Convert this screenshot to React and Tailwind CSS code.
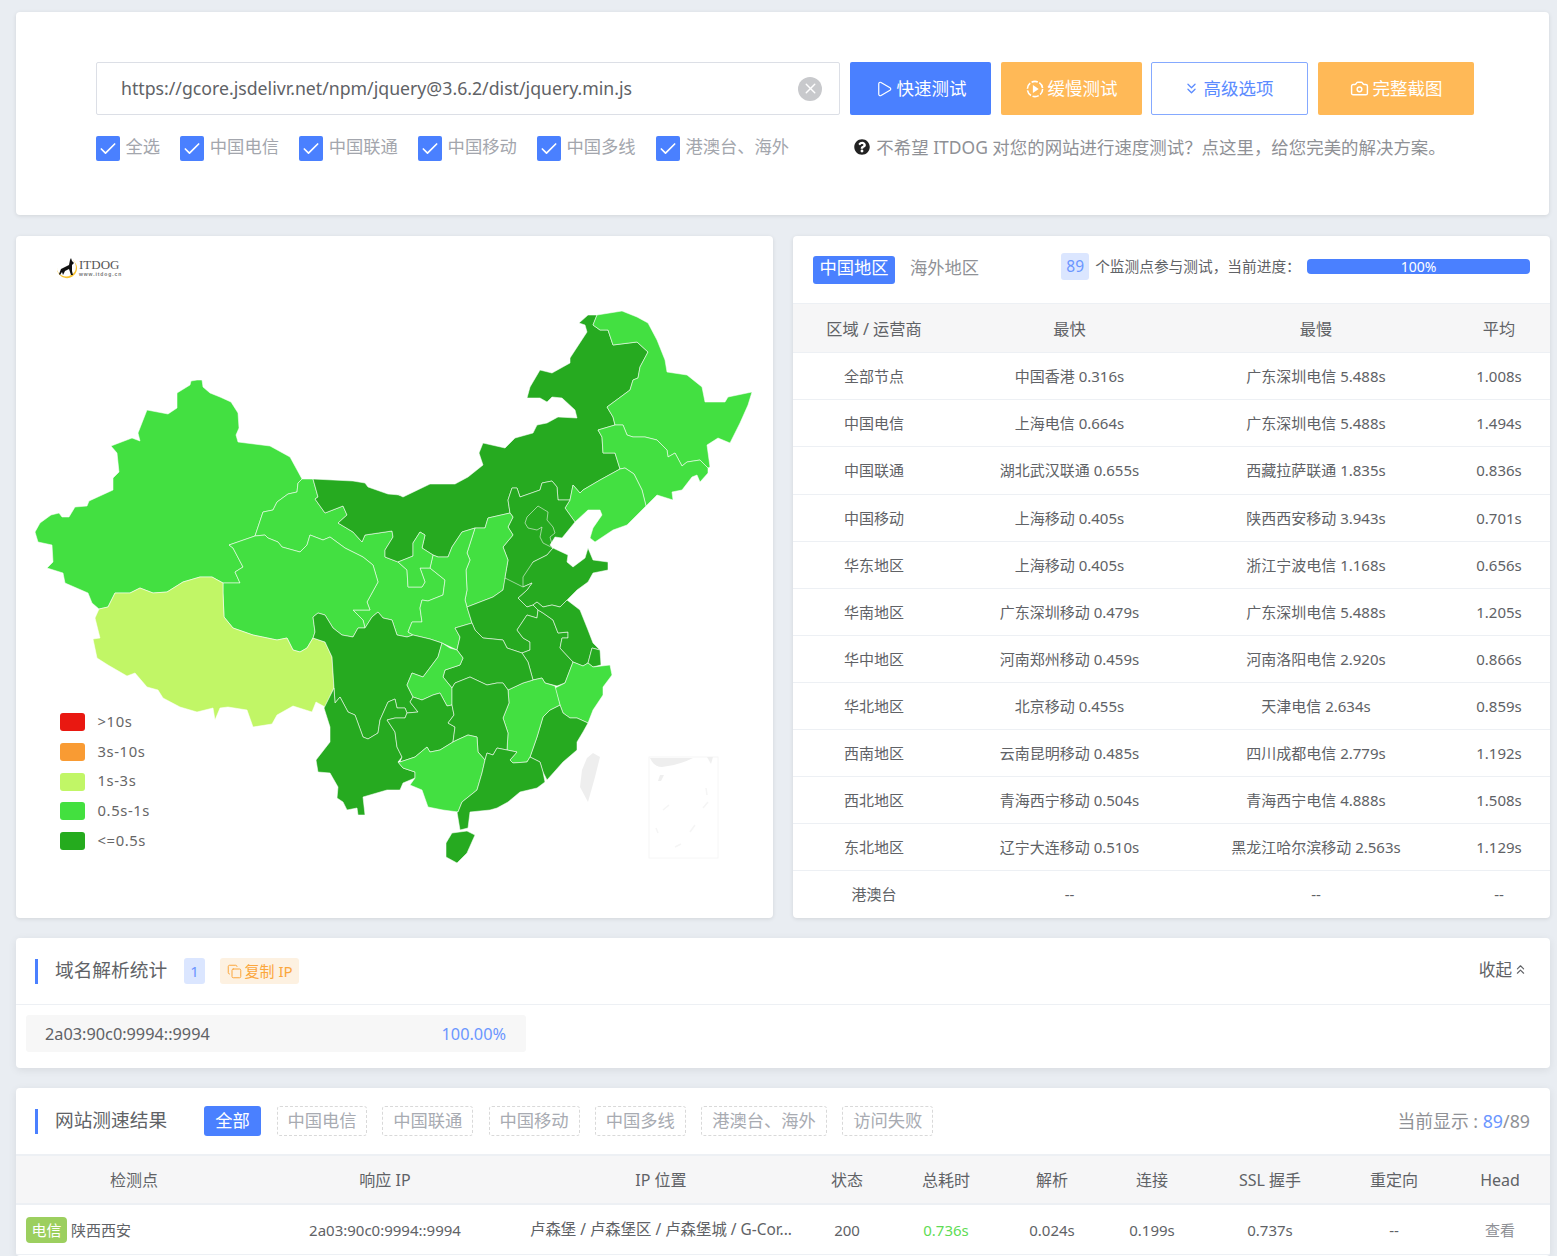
import React from "react";
import { Play, ChevronsDown, ChevronsUp, Camera, Copy, Check, X } from "lucide-react";
import { FaQuestionCircle } from "react-icons/fa";

const D = "#26aa20";
const L = "#43e041";
const Y = "#c1f666";

const regions = [
  [L, "197,380 191,381 190,385 177,393 177,408 168,414 147,410 138,433 140,441 132,438 111,446 117,453 119,472 113,478 113,490 89,501 87,506 75,507 69,517 62,517 59,513 51,515 40,523 35,532 38,542 52,545 53,562 47,568 63,573 65,583 88,593 92,603 99,609 108,607 115,593 130,593 140,588 153,593 167,592 183,582 200,577 212,577 223,583 240,583 235,572 243,567 233,548 229,545 255,536 263,512 273,510 277,502 288,494 297,492 298,483 302,479 290,457 270,446 238,442 236,435 239,428 238,413 231,402 220,397 210,393 203,387 202,380"],
  [L, "302,479 313,479 318,497 315,499 325,513 343,506 347,515 338,523 353,532 362,542 365,535 392,531 393,537 385,550 385,557 398,562 407,570 408,587 422,587 425,582 420,568 430,568 445,580 443,595 428,601 422,600 420,608 422,622 412,622 408,632 413,635 407,637 397,635 392,620 383,618 378,612 372,617 365,628 363,620 353,610 370,610 367,602 378,582 373,565 363,557 345,548 330,537 323,540 310,535 307,545 300,552 282,547 278,542 268,538 265,535 255,536 263,512 273,510 277,502 288,494 297,492 298,483"],
  [L, "229,545 255,536 265,535 268,538 278,542 282,547 300,552 307,545 310,535 323,540 330,537 345,548 363,557 373,565 378,582 367,602 370,610 353,610 363,620 365,628 358,628 353,637 342,635 333,628 325,615 318,613 313,617 315,632 313,638 307,648 300,652 293,650 287,638 277,640 253,635 233,628 224,617 223,593 223,583 240,583 235,572 243,567 233,548"],
  [Y, "99,609 108,607 115,593 130,593 140,588 153,593 167,592 183,582 200,577 212,577 223,583 223,593 224,617 233,628 253,635 277,640 287,638 293,650 300,652 307,648 313,638 325,642 332,657 334,688 332,692 325,707 316,702 312,712 293,706 277,715 272,724 253,727 247,710 228,707 220,708 215,720 213,708 197,712 180,707 163,698 158,690 147,687 135,673 127,676 108,665 97,658 93,639 100,638 95,618"],
  [D, "313,479 353,481 365,483 368,487 388,494 400,495 397,494 403,497 430,484 455,484 468,477 483,465 479,453 483,443 505,448 515,438 533,433 537,425 547,423 558,417 577,418 575,410 562,398 552,397 547,402 540,398 527,398 530,387 540,370 552,373 570,363 570,358 587,332 585,325 579,323 588,315 597,315 593,325 600,330 608,330 613,345 637,342 648,352 640,367 638,378 633,380 630,390 607,407 613,417 615,425 598,430 602,437 603,453 615,453 620,469 600,480 583,490 580,493 573,485 570,500 558,500 557,487 552,481 542,483 540,490 520,497 517,488 512,488 508,500 510,513 488,518 485,528 475,528 462,532 452,547 448,557 438,557 433,555 422,548 425,535 420,532 413,543 413,556 398,562 385,557 385,550 393,537 392,531 365,535 362,542 353,532 338,523 347,515 343,506 325,513 315,499 318,497"],
  [L, "597,315 622,311 637,317 648,323 657,340 665,360 667,372 687,375 702,387 705,402 725,402 728,397 752,392 748,405 740,423 730,443 718,438 707,445 710,467 708,468 700,460 687,462 682,466 675,453 668,457 667,450 657,440 645,437 633,437 627,435 623,425 615,425 613,417 607,407 630,390 633,380 638,378 640,367 648,352 637,342 613,345 608,330 600,330 593,325"],
  [L, "615,425 623,425 627,435 633,437 645,437 657,440 667,450 668,457 675,453 682,466 687,462 700,460 708,468 708,473 700,482 697,475 692,477 682,490 672,492 673,500 657,495 646,506 642,490 634,474 625,468 620,469 615,453 603,453 602,437 598,430"],
  [L, "620,469 625,468 634,474 642,490 646,506 627,525 613,530 595,542 590,538 593,528 602,515 600,510 588,510 575,522 565,508 570,500 573,485 580,493 583,490 600,480"],
  [D, "570,500 558,500 557,487 552,481 542,483 540,490 520,497 517,488 512,488 508,500 510,513 513,517 508,527 513,535 503,547 508,560 505,577 505,582 523,589 525,580 533,562 547,555 553,548 550,545 555,537 562,538 575,522 565,508"],
  [L, "475,528 485,528 488,518 510,513 513,517 508,527 513,535 503,547 508,560 505,577 505,580 503,590 493,597 480,602 467,607 465,600 467,590 466,570 470,560 467,553"],
  [L, "462,532 475,528 467,553 470,560 466,570 467,590 465,600 467,607 472,623 455,628 460,637 457,650 442,643 430,639 413,635 408,632 412,622 422,622 420,608 422,600 428,601 443,595 445,580 430,568 433,555 438,557 448,557 452,547"],
  [L, "413,556 413,543 420,532 425,535 422,548 433,555 430,568 420,568 425,582 422,587 408,587 407,570 398,562"],
  [D, "553,548 568,555 567,562 573,567 585,558 588,548 593,560 608,562 608,570 593,573 588,582 577,590 567,600 560,607 552,605 543,607 537,602 533,605 527,607 518,598 527,590 532,583 523,587 523,577 533,562 547,555"],
  [D, "505,578 523,587 532,583 527,590 518,598 527,607 533,605 538,610 537,618 527,615 517,630 523,638 530,642 530,650 522,653 507,648 503,640 483,638 475,630 472,623 467,607 480,602 493,597 503,590"],
  [D, "527,615 537,618 538,610 543,613 553,620 558,633 568,632 568,638 562,638 560,648 573,662 565,683 557,686 545,683 542,678 533,680 528,662 522,653 530,650 530,642 523,638 517,630"],
  [D, "537,602 543,607 552,605 560,607 567,600 580,610 588,630 593,643 600,650 592,648 588,663 583,666 573,662 560,648 562,638 568,638 568,632 558,633 553,620 543,613 538,610 533,605"],
  [D, "592,648 600,650 601,665 593,667 588,663"],
  [L, "573,662 583,666 588,663 593,667 610,665 612,675 603,687 603,695 593,710 588,723 577,718 570,718 563,713 560,705 555,688 565,683"],
  [D, "560,705 563,713 570,718 577,718 588,723 583,732 577,742 577,750 563,762 547,780 543,772 540,762 530,757 537,737 543,717 550,710"],
  [L, "508,690 523,683 533,680 542,678 545,683 555,686 560,705 550,710 543,717 537,737 530,757 527,762 513,763 510,760 517,752 507,750 508,733 503,718 509,703"],
  [D, "457,650 460,637 455,628 472,623 475,630 483,638 503,640 507,648 522,653 528,662 533,680 523,683 508,690 503,683 497,683 487,685 470,677 455,683 452,688 443,677 445,670 460,665 463,658"],
  [D, "313,617 318,613 325,615 333,628 342,635 353,637 358,628 365,628 372,617 378,612 383,618 392,620 397,635 407,637 413,635 430,639 442,643 438,657 432,665 423,677 412,673 407,685 413,697 410,702 418,712 407,713 405,708 397,708 395,699 388,702 380,720 378,733 368,739 363,737 355,715 348,712 340,697 335,703 334,688 332,657 325,642 313,638 315,632"],
  [L, "442,643 450,648 457,650 463,658 460,665 445,670 443,677 452,688 452,705 447,706 440,693 433,695 422,700 413,697 407,685 412,673 423,677 432,665 438,657"],
  [D, "380,720 388,702 395,699 397,708 405,708 407,713 405,718 395,718 387,720 395,732 397,747 402,757 398,762 403,768 415,772 415,778 403,783 400,790 387,790 363,797 365,815 358,815 357,808 347,810 343,802 337,798 338,787 330,773 318,772 316,760 330,742 330,727 324,708 332,692 334,688 335,703 340,697 348,712 355,715 363,737 368,739 378,733"],
  [D, "387,720 395,718 405,718 407,713 418,712 410,702 413,697 422,700 433,695 440,693 447,706 452,705 454,715 448,723 455,727 453,742 440,750 430,752 427,747 415,757 400,762 402,757 397,747 395,732"],
  [D, "452,688 455,683 470,677 487,685 497,683 503,683 508,690 509,703 503,718 508,733 507,750 497,748 493,755 487,753 485,760 478,752 477,737 468,735 457,740 453,742 455,727 448,723 454,715 452,705"],
  [L, "415,757 427,747 430,752 440,750 453,742 457,740 468,735 477,737 478,752 485,760 482,773 477,790 462,802 458,812 443,810 428,807 422,790 410,785 415,778 415,772 403,768 398,762 400,762"],
  [D, "485,760 487,753 493,755 497,748 507,750 517,752 510,760 513,763 527,762 530,757 540,762 543,772 545,782 537,788 520,792 508,802 497,808 490,810 470,812 468,828 460,830 457,812 458,812 462,802 477,790 482,773"],
  [D, "475,835 467,853 457,863 446,857 446,843 452,833 467,831"],
];

const islands = "593,753 600,757 595,777 588,802 580,787 582,770 587,758";

const bjtj = "525,523 527,517 538,506 548,512 547,520 553,527 555,533 550,537 553,548 543,543 540,537 542,527 537,530 528,528 525,523";

const ChinaMap = () => (
  <svg className="absolute left-0 top-0" width="757" height="682" viewBox="16 236 757 682">
    {regions.map(([fill, points], i) => (
      <polygon key={i} points={points} fill={fill} stroke="#ffffff" strokeOpacity="0.6" strokeWidth="0.9" strokeLinejoin="round" />
    ))}
    <polyline points={bjtj} fill="none" stroke="#ffffff" strokeOpacity="0.6" strokeWidth="0.9" />
    <polygon points={islands} fill="#eeeeee" />
    <rect x="649" y="757" width="69" height="101" fill="none" stroke="#f6f6f6" strokeWidth="1" />
    <path d="M650 758 L693 758 Q680 765 662 767 Q654 767 650 758 Z" fill="#eeeeee" />
    <path d="M707 757 L713 757 L711 764 Z M664 775 L661 781 L658 781 L660 775 Z" fill="#efefef" />
    <path d="M706 788 L707 795 M663 810 L669 805 M703 808 L708 802 M690 832 L695 825 M675 847 L681 844 M656 828 L658 833" stroke="#f5f5f5" strokeWidth="1.5" fill="none" />
  </svg>
);

const Logo = () => (
  <div className="absolute left-[40px] top-[21px] flex items-center gap-[2px]">
    <svg width="21" height="22" viewBox="0 0 21 22">
      <path d="M15 2 A10 10 0 1 1 1 11 A9 9 0 0 0 15 18 A9 9 0 0 0 15 2 Z" fill="#f8c22e" />
      <path d="M3 17 L5 12 L9 10 L13 8 L14 3 L15 1 L16 4 L18 6 L16 8 L16 14 L17 18 L15 18 L13 12 L9 14 L7 18 L6 15 L4 18 Z" fill="#111111" />
    </svg>
    <div className="flex flex-col leading-none">
      <span className="text-[13px] leading-[12px] text-[#555555] [font-family:'Liberation_Serif',serif]">ITDOG</span>
      <span className="text-[5px] leading-[7px] font-bold tracking-[0.9px] text-[#777777] [font-family:'Liberation_Sans',sans-serif]">www.itdog.cn</span>
    </div>
  </div>
);

const legend = [
  ["bg-[#e91811]", ">10s"],
  ["bg-[#f99b33]", "3s-10s"],
  ["bg-[#c1f666]", "1s-3s"],
  ["bg-[#43e03f]", "0.5s-1s"],
  ["bg-[#25ab1e]", "<=0.5s"],
];

const Legend = () => (
  <div className="absolute left-[44px] top-[477px] flex flex-col gap-[11.75px]">
    {legend.map(([c, t]) => (
      <div key={t} className="flex h-[18px] items-center gap-[12.5px]">
        <span className={`h-[18px] w-[25px] rounded-[3px] ${c}`} />
        <span className="pb-[2px] text-[14.8px] tracking-[0.6px] text-[#666666]">{t}</span>
      </div>
    ))}
  </div>
);

const Box = ({ label }) => (
  <label className="flex h-[25px] items-center gap-[5.5px]">
    <span className="flex h-[25px] w-[24px] items-center justify-center rounded-[2px] bg-[#4a80ff] text-white">
      <Check size={20} strokeWidth={2} />
    </span>
    <span className="pb-[3px] text-[17.3px] text-[#a3a6ad]">{label}</span>
  </label>
);

const Btn = ({ w, cls, children }) => (
  <button className={`flex h-[53px] items-center justify-center gap-[4px] rounded-[2px] text-[17.5px] ${w} ${cls}`}>
    {children}
  </button>
);

const SlowIcon = () => (
  <svg width="18" height="18" viewBox="0 0 17 17">
    <circle cx="8.5" cy="8.5" r="7.2" fill="none" stroke="#ffffff" strokeWidth="1.5" strokeDasharray="6 1.6" />
    <path d="M6.5 4.8 L12 8.5 L6.5 12.2 Z" fill="#ffffff" />
  </svg>
);

const summary = [
  ["全部节点", "中国香港 0.316s", "广东深圳电信 5.488s", "1.008s"],
  ["中国电信", "上海电信 0.664s", "广东深圳电信 5.488s", "1.494s"],
  ["中国联通", "湖北武汉联通 0.655s", "西藏拉萨联通 1.835s", "0.836s"],
  ["中国移动", "上海移动 0.405s", "陕西西安移动 3.943s", "0.701s"],
  ["华东地区", "上海移动 0.405s", "浙江宁波电信 1.168s", "0.656s"],
  ["华南地区", "广东深圳移动 0.479s", "广东深圳电信 5.488s", "1.205s"],
  ["华中地区", "河南郑州移动 0.459s", "河南洛阳电信 2.920s", "0.866s"],
  ["华北地区", "北京移动 0.455s", "天津电信 2.634s", "0.859s"],
  ["西南地区", "云南昆明移动 0.485s", "四川成都电信 2.779s", "1.192s"],
  ["西北地区", "青海西宁移动 0.504s", "青海西宁电信 4.888s", "1.508s"],
  ["东北地区", "辽宁大连移动 0.510s", "黑龙江哈尔滨移动 2.563s", "1.129s"],
  ["港澳台", "--", "--", "--"],
];

const filters = [
  ["中国电信", "w-[90px]"],
  ["中国联通", "w-[91px]"],
  ["中国移动", "w-[91px]"],
  ["中国多线", "w-[91px]"],
  ["港澳台、海外", "w-[126px]"],
  ["访问失败", "w-[91px]"],
];

const heads = ["检测点", "响应 IP", "IP 位置", "状态", "总耗时", "解析", "连接", "SSL 握手", "重定向", "Head"];

const Bar = () => <span className="h-[25px] w-[3px] bg-[#4a80ff]" />;

export default function App() {
  return (
    <div className="flex h-[1256px] flex-col overflow-hidden bg-[#e9edf2] pl-[16px] pr-[7px] pt-[12px] text-[#606266] [font-family:'Noto_Sans','Noto_Sans_CJK_SC',sans-serif]">
      {/* Search */}
      <section className="mr-px h-[203px] shrink-0 rounded-[4px] bg-white pl-[80px] pt-[50px] shadow-[0_1px_4px_rgba(0,0,0,0.1)]">
        <div className="flex items-center">
          <div className="flex h-[53px] w-[744px] items-center justify-between rounded-[2px] border border-[#dcdfe6] pl-[24px] pr-[17px]">
            <span className="text-[17.7px] text-[#606266]">https://gcore.jsdelivr.net/npm/jquery@3.6.2/dist/jquery.min.js</span>
            <span className="flex h-[24px] w-[24px] items-center justify-center rounded-full bg-[#c8c9cc] text-white">
              <X size={17} strokeWidth={2} />
            </span>
          </div>
          <Btn w="ml-[10px] w-[141px]" cls="bg-[#4a80ff] text-white">
            <Play size={18} strokeWidth={1.6} />快速测试
          </Btn>
          <Btn w="ml-[10px] w-[141px]" cls="bg-[#ffb957] text-white">
            <SlowIcon />缓慢测试
          </Btn>
          <Btn w="ml-[9px] w-[157px]" cls="border border-[#85a9ff] bg-white pr-[3px] text-[#5b8bff]">
            <ChevronsDown size={17} strokeWidth={1.8} />高级选项
          </Btn>
          <Btn w="ml-[10px] w-[156px]" cls="bg-[#ffb957] text-white">
            <Camera size={19} strokeWidth={1.8} />完整截图
          </Btn>
        </div>
        <div className="mt-[21px] flex h-[25px] items-center gap-[20.25px]">
          {["全选", "中国电信", "中国联通", "中国移动", "中国多线", "港澳台、海外"].map((l) => (
            <Box key={l} label={l} />
          ))}
          <div className="ml-[45px] flex items-center gap-[6px] pb-[3px] text-[17.45px] text-[#8f9196]">
            <FaQuestionCircle className="text-[#222222]" size={16} />
            <span>不希望 ITDOG 对您的网站进行速度测试？点这里，给您完美的解决方案。</span>
          </div>
        </div>
      </section>

      {/* Map + summary */}
      <div className="mt-[21px] flex h-[682px] shrink-0 gap-[20px]">
        <section className="relative h-full w-[757px] rounded-[4px] bg-white shadow-[0_1px_4px_rgba(0,0,0,0.1)]">
          <ChinaMap />
          <Logo />
          <Legend />
        </section>
        <section className="h-full w-[757px] overflow-hidden rounded-[4px] bg-white shadow-[0_1px_4px_rgba(0,0,0,0.1)]">
          <div className="flex h-[67px] items-center pl-[20px]">
            <span className="flex h-[28px] w-[82px] items-center justify-center rounded-[3px] bg-[#4a80ff] pb-[3px] text-[17.3px] text-white">中国地区</span>
            <span className="ml-[15px] pb-[3px] text-[17.3px] text-[#8f9196]">海外地区</span>
            <div className="ml-[82px] mb-[6px] flex items-center">
              <span className="flex h-[27px] w-[28px] items-center justify-center rounded-[3px] bg-[#dbe6ff] text-[15.5px] text-[#6b96ff]">89</span>
              <span className="ml-[6px] w-[206px] shrink-0 text-[14.7px] text-[#606266]">个监测点参与测试，当前进度：</span>
              <div className="ml-[6px] flex h-[15px] w-[223px] items-center justify-center rounded-[4px] bg-[#4a80ff] text-[14px] text-white">100%</div>
            </div>
          </div>
          <div className="grid h-[50px] grid-cols-[162px_229px_264px_102px] items-center border-y border-[#edf0f4] bg-[#f6f6f7] pt-[3px] text-center text-[16.2px]">
            <span>区域 / 运营商</span><span>最快</span><span>最慢</span><span>平均</span>
          </div>
          {summary.map((r, idx) => (
            <div key={r[0]} className={`grid grid-cols-[162px_229px_264px_102px] items-center border-b border-[#edf0f4] text-center text-[15px] last:border-b-0 ${idx === 2 ? "h-[48px]" : "h-[47px]"}`}>
              {r.map((c, i) => (
                <span key={i}>{c}</span>
              ))}
            </div>
          ))}
        </section>
      </div>

      {/* DNS */}
      <section className="mt-[20px] h-[130px] shrink-0 rounded-[4px] bg-white shadow-[0_2px_8px_rgba(0,0,0,0.08)]">
        <div className="flex h-[67px] items-center border-b border-[#edf0f4] pl-[19px] pr-[22px]">
          <Bar />
          <span className="ml-[17px] pb-[2px] text-[18.7px] text-[#606266]">域名解析统计</span>
          <span className="ml-[17px] flex h-[26px] w-[21px] items-center justify-center rounded-[3px] bg-[#dbe6ff] text-[15px] text-[#6b96ff]">1</span>
          <span className="ml-[15px] flex h-[26px] w-[79px] items-center justify-center gap-[3px] rounded-[3px] bg-[#fdf1e1] text-[15px] text-[#fba63c]">
            <Copy size={15} strokeWidth={1.6} />复制 IP
          </span>
          <span className="ml-auto flex items-center pb-[2px] text-[16.6px]">收起<ChevronsUp size={15} strokeWidth={1.8} className="ml-[1px]" /></span>
        </div>
        <div className="ml-[10px] mt-[10px] flex h-[37px] w-[500px] items-center justify-between rounded-[3px] bg-[#f7f7f7] pl-[19px] pr-[20px] pt-[1px] text-[16.3px]">
          <span>2a03:90c0:9994::9994</span>
          <span className="text-[#6b96ff]">100.00%</span>
        </div>
      </section>

      {/* Results */}
      <section className="mt-[20px] flex-1 overflow-hidden rounded-[4px] bg-white shadow-[0_2px_8px_rgba(0,0,0,0.08)]">
        <div className="flex h-[66px] items-center pl-[19px] pr-[20px]">
          <Bar />
          <span className="ml-[17px] w-[113px] pb-[2px] text-[18.7px]">网站测速结果</span>
          <span className="ml-[36px] flex h-[30px] w-[57px] items-center justify-center rounded-[3px] bg-[#4a80ff] pb-[1px] text-[17.3px] text-white">全部</span>
          <div className="ml-[16px] flex gap-[15.25px]">
            {filters.map(([t, w]) => (
              <span key={t} className={`flex h-[30px] items-center justify-center rounded-[3px] border border-dashed border-[#d9d9d9] pb-[1px] text-[17.3px] text-[#a8abb2] ${w}`}>{t}</span>
            ))}
          </div>
          <span className="ml-auto text-[17.8px] text-[#8f9196]">当前显示 : <span className="text-[#6b96ff]">89</span>/89</span>
        </div>
        <div className="grid h-[51px] grid-cols-[236px_266px_286px_86px_112px_100px_100px_136px_112px_100px] items-center border-y-2 border-y-[#edf0f4] bg-[#f6f6f7] pt-[1px] text-center text-[16px]">
          {heads.map((h) => (
            <span key={h}>{h}</span>
          ))}
        </div>
        <div className="grid h-[50px] grid-cols-[236px_266px_286px_86px_112px_100px_100px_136px_112px_100px] items-center border-b border-[#edf0f4] pt-[1px] text-center text-[15px]">
          <span className="flex items-center gap-[4px] pl-[10px] text-left">
            <span className="flex h-[26px] w-[41px] items-center justify-center rounded-[4px] bg-[#9ccf5f] text-white">电信</span>陕西西安
          </span>
          <span>2a03:90c0:9994::9994</span>
          <span className="text-[15.4px]">卢森堡 / 卢森堡区 / 卢森堡城 / G-Cor...</span>
          <span>200</span>
          <span className="text-[#5fdc55]">0.736s</span>
          <span>0.024s</span>
          <span>0.199s</span>
          <span>0.737s</span>
          <span>--</span>
          <span className="text-[#8f9196]">查看</span>
        </div>
      </section>
    </div>
  );
}
